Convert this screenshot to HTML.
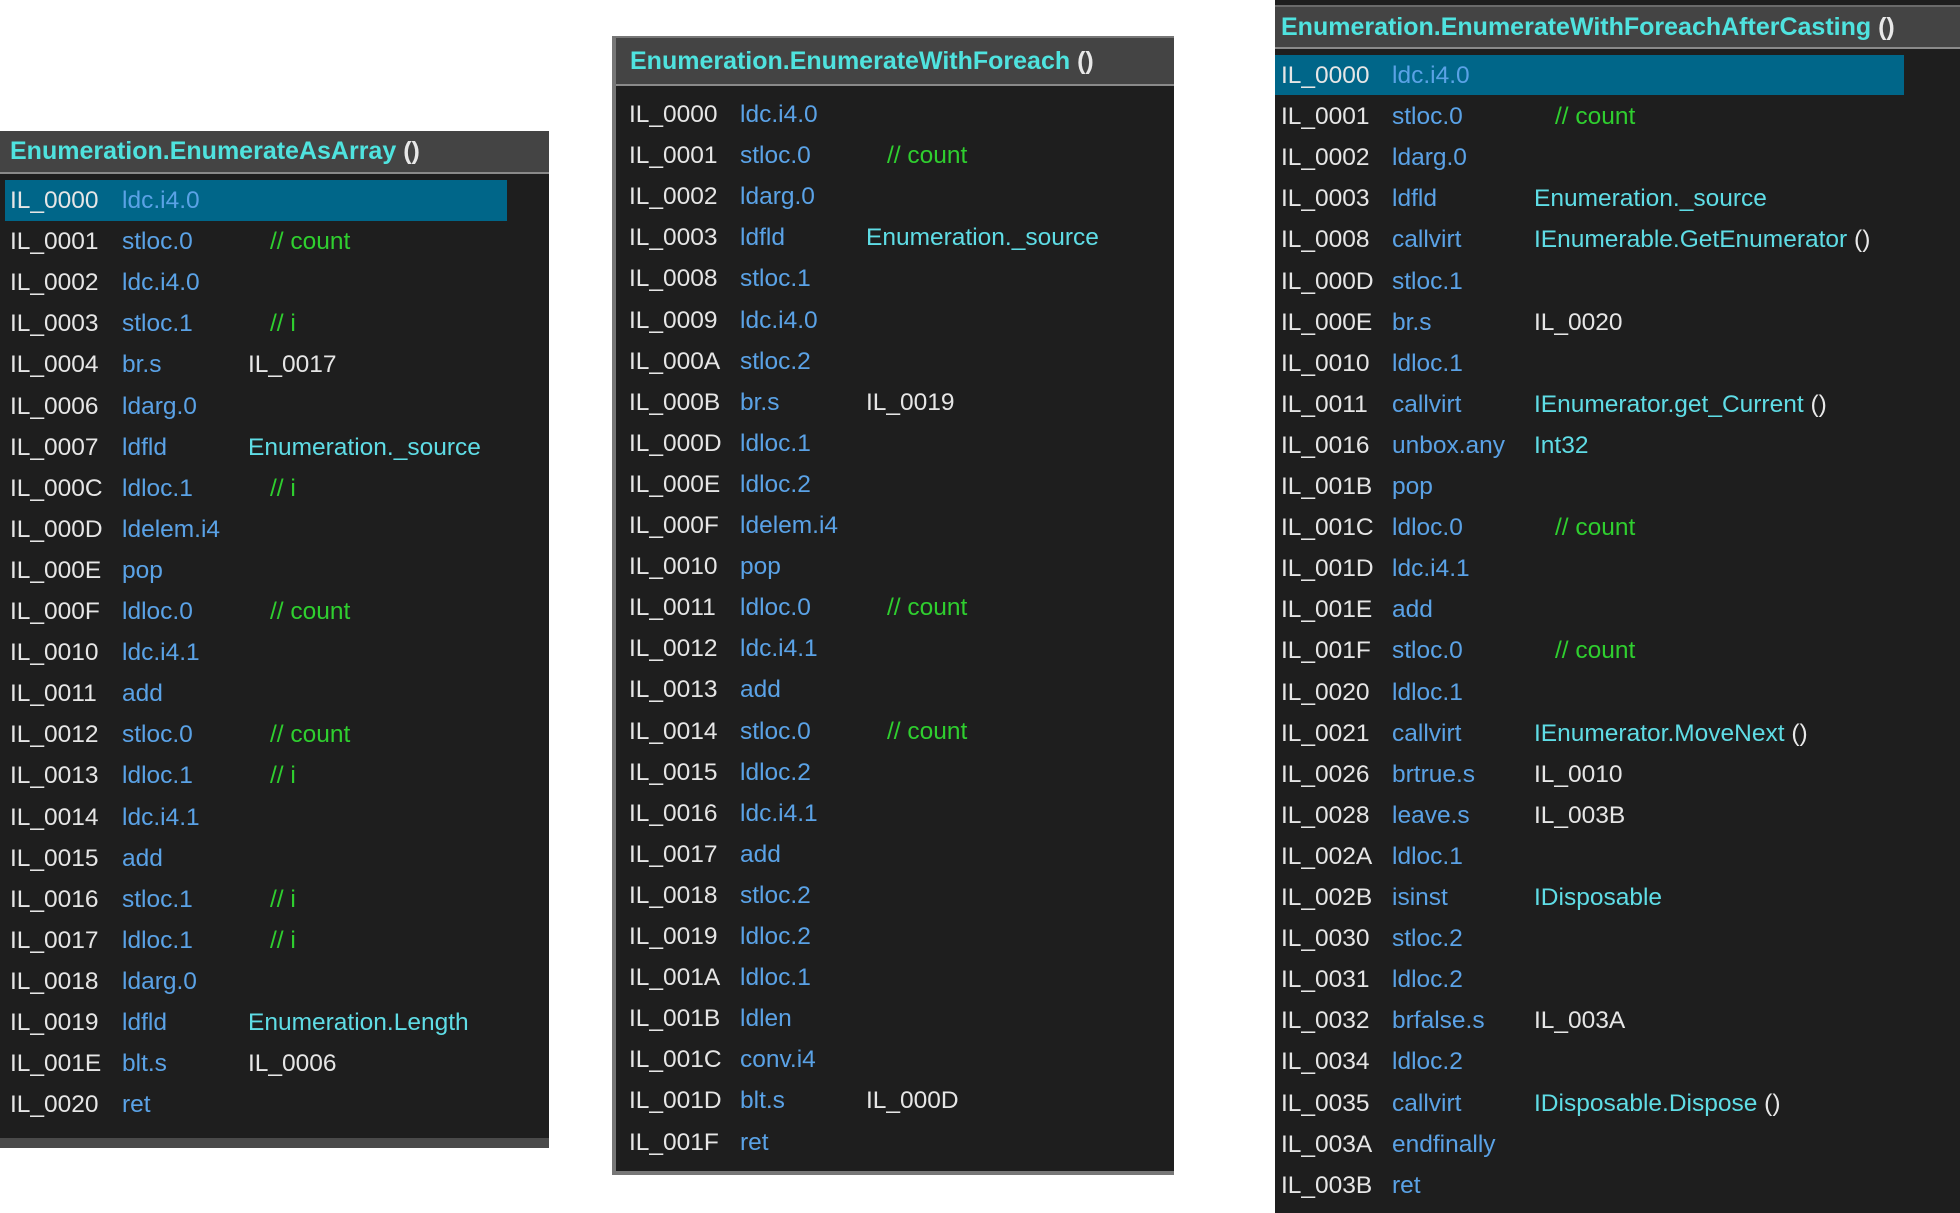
<!DOCTYPE html>
<html><head><meta charset="utf-8"><style>
body{margin:0;width:1960px;height:1213px;background:#fff;position:relative;overflow:hidden;font-family:"Liberation Sans",sans-serif;}
.p{position:absolute;background:#1e1e1e;}
.h{position:absolute;left:0;right:0;background:#444;border-bottom:2px solid #8a8a8a;color:#4fe3df;font-weight:bold;font-size:25px;box-sizing:border-box;padding-left:10px;}
.h b{color:#e8e8e8;}
.r{position:absolute;left:0;height:41px;font-size:24.5px;color:#e6e6e6;line-height:41px;white-space:nowrap;}
.r span{position:absolute;top:0;}
.o{color:#5aa2e6;}
.c{color:#2fcf2f;}
.t{color:#5fdde6;}
.hl{position:absolute;background:#006689;}
</style></head><body>

<!-- Panel 1 -->
<div class="p" style="left:0;top:131px;width:549px;height:1017px;">
<div class="h" style="top:0;height:43px;line-height:40px;">Enumeration.EnumerateAsArray <b>()</b></div>
<div style="position:absolute;left:0;right:0;bottom:0;height:10px;background:#4a4a4a;"></div>
<div class="hl" style="left:5px;top:49px;width:502px;height:41px;"></div>
<div style="position:absolute;left:0;top:49px;width:549px;">
<div class="r" style="top:0px"><span style="left:10px">IL_0000</span><span class="o" style="left:122px">ldc.i4.0</span></div>
<div class="r" style="top:41.1px"><span style="left:10px">IL_0001</span><span class="o" style="left:122px">stloc.0</span><span class="c" style="left:270px">// count</span></div>
<div class="r" style="top:82.2px"><span style="left:10px">IL_0002</span><span class="o" style="left:122px">ldc.i4.0</span></div>
<div class="r" style="top:123.3px"><span style="left:10px">IL_0003</span><span class="o" style="left:122px">stloc.1</span><span class="c" style="left:270px">// i</span></div>
<div class="r" style="top:164.4px"><span style="left:10px">IL_0004</span><span class="o" style="left:122px">br.s</span><span style="left:248px">IL_0017</span></div>
<div class="r" style="top:205.5px"><span style="left:10px">IL_0006</span><span class="o" style="left:122px">ldarg.0</span></div>
<div class="r" style="top:246.6px"><span style="left:10px">IL_0007</span><span class="o" style="left:122px">ldfld</span><span class="t" style="left:248px">Enumeration._source</span></div>
<div class="r" style="top:287.7px"><span style="left:10px">IL_000C</span><span class="o" style="left:122px">ldloc.1</span><span class="c" style="left:270px">// i</span></div>
<div class="r" style="top:328.8px"><span style="left:10px">IL_000D</span><span class="o" style="left:122px">ldelem.i4</span></div>
<div class="r" style="top:369.9px"><span style="left:10px">IL_000E</span><span class="o" style="left:122px">pop</span></div>
<div class="r" style="top:411px"><span style="left:10px">IL_000F</span><span class="o" style="left:122px">ldloc.0</span><span class="c" style="left:270px">// count</span></div>
<div class="r" style="top:452.1px"><span style="left:10px">IL_0010</span><span class="o" style="left:122px">ldc.i4.1</span></div>
<div class="r" style="top:493.2px"><span style="left:10px">IL_0011</span><span class="o" style="left:122px">add</span></div>
<div class="r" style="top:534.3px"><span style="left:10px">IL_0012</span><span class="o" style="left:122px">stloc.0</span><span class="c" style="left:270px">// count</span></div>
<div class="r" style="top:575.4px"><span style="left:10px">IL_0013</span><span class="o" style="left:122px">ldloc.1</span><span class="c" style="left:270px">// i</span></div>
<div class="r" style="top:616.5px"><span style="left:10px">IL_0014</span><span class="o" style="left:122px">ldc.i4.1</span></div>
<div class="r" style="top:657.6px"><span style="left:10px">IL_0015</span><span class="o" style="left:122px">add</span></div>
<div class="r" style="top:698.7px"><span style="left:10px">IL_0016</span><span class="o" style="left:122px">stloc.1</span><span class="c" style="left:270px">// i</span></div>
<div class="r" style="top:739.8px"><span style="left:10px">IL_0017</span><span class="o" style="left:122px">ldloc.1</span><span class="c" style="left:270px">// i</span></div>
<div class="r" style="top:780.9px"><span style="left:10px">IL_0018</span><span class="o" style="left:122px">ldarg.0</span></div>
<div class="r" style="top:822px"><span style="left:10px">IL_0019</span><span class="o" style="left:122px">ldfld</span><span class="t" style="left:248px">Enumeration.Length</span></div>
<div class="r" style="top:863.1px"><span style="left:10px">IL_001E</span><span class="o" style="left:122px">blt.s</span><span style="left:248px">IL_0006</span></div>
<div class="r" style="top:904.2px"><span style="left:10px">IL_0020</span><span class="o" style="left:122px">ret</span></div>
</div>
</div>

<!-- Panel 2 -->
<div class="p" style="left:612px;top:36px;width:562px;height:1139px;border-left:4px solid #777;border-top:2px solid #777;border-bottom:4px solid #777;box-sizing:border-box;">
<div class="h" style="top:0;height:48px;line-height:46px;padding-left:14px;">Enumeration.EnumerateWithForeach <b>()</b></div>
<div style="position:absolute;left:-4px;top:56px;width:562px;">
<div class="r" style="top:0px"><span style="left:17px">IL_0000</span><span class="o" style="left:128px">ldc.i4.0</span></div>
<div class="r" style="top:41.1px"><span style="left:17px">IL_0001</span><span class="o" style="left:128px">stloc.0</span><span class="c" style="left:275px">// count</span></div>
<div class="r" style="top:82.2px"><span style="left:17px">IL_0002</span><span class="o" style="left:128px">ldarg.0</span></div>
<div class="r" style="top:123.3px"><span style="left:17px">IL_0003</span><span class="o" style="left:128px">ldfld</span><span class="t" style="left:254px">Enumeration._source</span></div>
<div class="r" style="top:164.4px"><span style="left:17px">IL_0008</span><span class="o" style="left:128px">stloc.1</span></div>
<div class="r" style="top:205.5px"><span style="left:17px">IL_0009</span><span class="o" style="left:128px">ldc.i4.0</span></div>
<div class="r" style="top:246.6px"><span style="left:17px">IL_000A</span><span class="o" style="left:128px">stloc.2</span></div>
<div class="r" style="top:287.7px"><span style="left:17px">IL_000B</span><span class="o" style="left:128px">br.s</span><span style="left:254px">IL_0019</span></div>
<div class="r" style="top:328.8px"><span style="left:17px">IL_000D</span><span class="o" style="left:128px">ldloc.1</span></div>
<div class="r" style="top:369.9px"><span style="left:17px">IL_000E</span><span class="o" style="left:128px">ldloc.2</span></div>
<div class="r" style="top:411px"><span style="left:17px">IL_000F</span><span class="o" style="left:128px">ldelem.i4</span></div>
<div class="r" style="top:452.1px"><span style="left:17px">IL_0010</span><span class="o" style="left:128px">pop</span></div>
<div class="r" style="top:493.2px"><span style="left:17px">IL_0011</span><span class="o" style="left:128px">ldloc.0</span><span class="c" style="left:275px">// count</span></div>
<div class="r" style="top:534.3px"><span style="left:17px">IL_0012</span><span class="o" style="left:128px">ldc.i4.1</span></div>
<div class="r" style="top:575.4px"><span style="left:17px">IL_0013</span><span class="o" style="left:128px">add</span></div>
<div class="r" style="top:616.5px"><span style="left:17px">IL_0014</span><span class="o" style="left:128px">stloc.0</span><span class="c" style="left:275px">// count</span></div>
<div class="r" style="top:657.6px"><span style="left:17px">IL_0015</span><span class="o" style="left:128px">ldloc.2</span></div>
<div class="r" style="top:698.7px"><span style="left:17px">IL_0016</span><span class="o" style="left:128px">ldc.i4.1</span></div>
<div class="r" style="top:739.8px"><span style="left:17px">IL_0017</span><span class="o" style="left:128px">add</span></div>
<div class="r" style="top:780.9px"><span style="left:17px">IL_0018</span><span class="o" style="left:128px">stloc.2</span></div>
<div class="r" style="top:822px"><span style="left:17px">IL_0019</span><span class="o" style="left:128px">ldloc.2</span></div>
<div class="r" style="top:863.1px"><span style="left:17px">IL_001A</span><span class="o" style="left:128px">ldloc.1</span></div>
<div class="r" style="top:904.2px"><span style="left:17px">IL_001B</span><span class="o" style="left:128px">ldlen</span></div>
<div class="r" style="top:945.3px"><span style="left:17px">IL_001C</span><span class="o" style="left:128px">conv.i4</span></div>
<div class="r" style="top:986.4px"><span style="left:17px">IL_001D</span><span class="o" style="left:128px">blt.s</span><span style="left:254px">IL_000D</span></div>
<div class="r" style="top:1027.5px"><span style="left:17px">IL_001F</span><span class="o" style="left:128px">ret</span></div>
</div>
</div>

<!-- Panel 3 -->
<div class="p" style="left:1275px;top:0;width:685px;height:1213px;">
<div class="h" style="top:5px;height:44px;line-height:40px;border-top:2px solid #6a6a6a;padding-left:6px;">Enumeration.EnumerateWithForeachAfterCasting <b>()</b></div>
<div class="hl" style="left:0;top:55px;width:629px;height:40px;"></div>
<div style="position:absolute;left:0;top:55px;width:685px;">
<div class="r" style="top:0px"><span style="left:6px">IL_0000</span><span class="o" style="left:117px">ldc.i4.0</span></div>
<div class="r" style="top:41.1px"><span style="left:6px">IL_0001</span><span class="o" style="left:117px">stloc.0</span><span class="c" style="left:280px">// count</span></div>
<div class="r" style="top:82.2px"><span style="left:6px">IL_0002</span><span class="o" style="left:117px">ldarg.0</span></div>
<div class="r" style="top:123.3px"><span style="left:6px">IL_0003</span><span class="o" style="left:117px">ldfld</span><span class="t" style="left:259px">Enumeration._source</span></div>
<div class="r" style="top:164.4px"><span style="left:6px">IL_0008</span><span class="o" style="left:117px">callvirt</span><span class="t" style="left:259px">IEnumerable.GetEnumerator <b style="color:#e8e8e8;font-weight:normal">()</b></span></div>
<div class="r" style="top:205.5px"><span style="left:6px">IL_000D</span><span class="o" style="left:117px">stloc.1</span></div>
<div class="r" style="top:246.6px"><span style="left:6px">IL_000E</span><span class="o" style="left:117px">br.s</span><span style="left:259px">IL_0020</span></div>
<div class="r" style="top:287.7px"><span style="left:6px">IL_0010</span><span class="o" style="left:117px">ldloc.1</span></div>
<div class="r" style="top:328.8px"><span style="left:6px">IL_0011</span><span class="o" style="left:117px">callvirt</span><span class="t" style="left:259px">IEnumerator.get_Current <b style="color:#e8e8e8;font-weight:normal">()</b></span></div>
<div class="r" style="top:369.9px"><span style="left:6px">IL_0016</span><span class="o" style="left:117px">unbox.any</span><span class="t" style="left:259px">Int32</span></div>
<div class="r" style="top:411px"><span style="left:6px">IL_001B</span><span class="o" style="left:117px">pop</span></div>
<div class="r" style="top:452.1px"><span style="left:6px">IL_001C</span><span class="o" style="left:117px">ldloc.0</span><span class="c" style="left:280px">// count</span></div>
<div class="r" style="top:493.2px"><span style="left:6px">IL_001D</span><span class="o" style="left:117px">ldc.i4.1</span></div>
<div class="r" style="top:534.3px"><span style="left:6px">IL_001E</span><span class="o" style="left:117px">add</span></div>
<div class="r" style="top:575.4px"><span style="left:6px">IL_001F</span><span class="o" style="left:117px">stloc.0</span><span class="c" style="left:280px">// count</span></div>
<div class="r" style="top:616.5px"><span style="left:6px">IL_0020</span><span class="o" style="left:117px">ldloc.1</span></div>
<div class="r" style="top:657.6px"><span style="left:6px">IL_0021</span><span class="o" style="left:117px">callvirt</span><span class="t" style="left:259px">IEnumerator.MoveNext <b style="color:#e8e8e8;font-weight:normal">()</b></span></div>
<div class="r" style="top:698.7px"><span style="left:6px">IL_0026</span><span class="o" style="left:117px">brtrue.s</span><span style="left:259px">IL_0010</span></div>
<div class="r" style="top:739.8px"><span style="left:6px">IL_0028</span><span class="o" style="left:117px">leave.s</span><span style="left:259px">IL_003B</span></div>
<div class="r" style="top:780.9px"><span style="left:6px">IL_002A</span><span class="o" style="left:117px">ldloc.1</span></div>
<div class="r" style="top:822px"><span style="left:6px">IL_002B</span><span class="o" style="left:117px">isinst</span><span class="t" style="left:259px">IDisposable</span></div>
<div class="r" style="top:863.1px"><span style="left:6px">IL_0030</span><span class="o" style="left:117px">stloc.2</span></div>
<div class="r" style="top:904.2px"><span style="left:6px">IL_0031</span><span class="o" style="left:117px">ldloc.2</span></div>
<div class="r" style="top:945.3px"><span style="left:6px">IL_0032</span><span class="o" style="left:117px">brfalse.s</span><span style="left:259px">IL_003A</span></div>
<div class="r" style="top:986.4px"><span style="left:6px">IL_0034</span><span class="o" style="left:117px">ldloc.2</span></div>
<div class="r" style="top:1027.5px"><span style="left:6px">IL_0035</span><span class="o" style="left:117px">callvirt</span><span class="t" style="left:259px">IDisposable.Dispose <b style="color:#e8e8e8;font-weight:normal">()</b></span></div>
<div class="r" style="top:1068.6px"><span style="left:6px">IL_003A</span><span class="o" style="left:117px">endfinally</span></div>
<div class="r" style="top:1109.7px"><span style="left:6px">IL_003B</span><span class="o" style="left:117px">ret</span></div>
</div>
</div>
</body></html>
